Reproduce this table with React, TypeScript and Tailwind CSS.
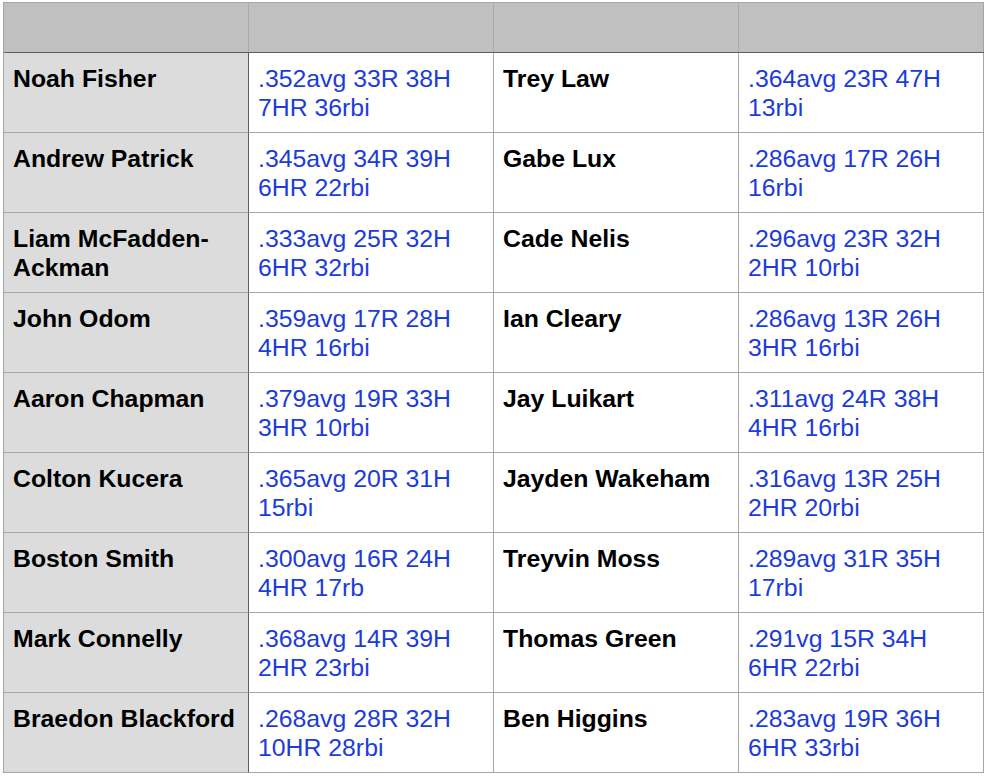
import React from "react";

const rows: [string, string, string, string][] = [
  ["Noah Fisher", ".352avg 33R 38H 7HR 36rbi", "Trey Law", ".364avg 23R 47H 13rbi"],
  ["Andrew Patrick", ".345avg 34R 39H 6HR 22rbi", "Gabe Lux", ".286avg 17R 26H 16rbi"],
  ["Liam McFadden-Ackman", ".333avg 25R 32H 6HR 32rbi", "Cade Nelis", ".296avg 23R 32H 2HR 10rbi"],
  ["John Odom", ".359avg 17R 28H 4HR 16rbi", "Ian Cleary", ".286avg 13R 26H 3HR 16rbi"],
  ["Aaron Chapman", ".379avg 19R 33H 3HR 10rbi", "Jay Luikart", ".311avg 24R 38H 4HR 16rbi"],
  ["Colton Kucera", ".365avg 20R 31H 15rbi", "Jayden Wakeham", ".316avg 13R 25H 2HR 20rbi"],
  ["Boston Smith", ".300avg 16R 24H 4HR 17rb", "Treyvin Moss", ".289avg 31R 35H 17rbi"],
  ["Mark Connelly", ".368avg 14R 39H 2HR 23rbi", "Thomas Green", ".291vg 15R 34H 6HR 22rbi"],
  ["Braedon Blackford", ".268avg 28R 32H 10HR 28rbi", "Ben Higgins", ".283avg 19R 36H 6HR 33rbi"],
];

const cellBase =
  "h-[80px] pt-[11px] pl-[9px] pr-[4px] border-b border-[#a6a6a6] text-[24.8px] leading-[29px]";

export default function App() {
  return (
    <div
      className="bg-white w-[984px] h-[780px] pt-[2px] pl-[3px]"
      style={{ fontFamily: '"Liberation Sans", Arial, Helvetica, sans-serif' }}
    >
      <div className="w-[981px] border-l border-t border-[#a6a6a6]">
        <div className="grid grid-cols-[245px_245px_245px_245px] h-[50px] bg-[#bfc0bf] border-b border-[#5e5e5e]">
          <div className="border-r border-[#a9aaa9]" />
          <div className="border-r border-[#a9aaa9]" />
          <div className="border-r border-[#a9aaa9]" />
          <div className="border-r border-[#a6a6a6]" />
        </div>
        {rows.map((r, i) => (
          <div key={i} className="grid grid-cols-[245px_245px_245px_245px]">
            <div className={`${cellBase} bg-[#dcdcdc] border-r border-r-[#5e5e5e] font-bold text-black`}>
              {r[0]}
            </div>
            <div className={`${cellBase} border-r border-r-[#a6a6a6] text-[#1c3cd9]`}>{r[1]}</div>
            <div className={`${cellBase} border-r border-r-[#a6a6a6] font-bold text-black`}>{r[2]}</div>
            <div className={`${cellBase} border-r border-r-[#a6a6a6] text-[#1c3cd9]`}>{r[3]}</div>
          </div>
        ))}
      </div>
    </div>
  );
}
